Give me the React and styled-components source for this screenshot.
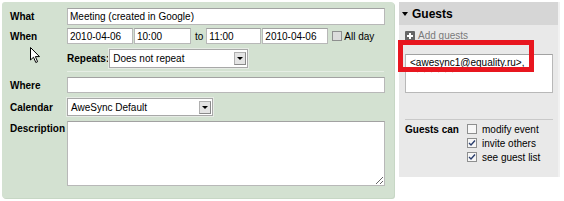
import React from 'react'
import styled, { createGlobalStyle } from 'styled-components'

const GlobalStyle = createGlobalStyle`
  html, body {
    margin: 0;
    padding: 0;
    background: #fff;
  }
  body {
    font-family: "Liberation Sans", Arial, sans-serif;
    font-size: 10px;
    color: #000;
  }
`

const Page = styled.div`
  position: relative;
  display: flex;
  align-items: flex-start;
  gap: 5px;
  width: 564px;
  height: 201px;
  padding: 2px 0 0 2px;
  box-sizing: border-box;
`

const EventPanel = styled.div`
  width: 392px;
  height: 196px;
  box-sizing: border-box;
  padding: 6px 9px 0 8px;
  background: #d3e1d1;
  border-radius: 3px;
  box-shadow: 1px 1px 0 #c7d7c5;
`

const FieldRow = styled.div`
  display: grid;
  grid-template-columns: 57px 1fr;
  align-items: ${p => (p.top ? 'start' : 'center')};
  margin-top: ${p => p.mt || 0}px;
`

const Label = styled.div`
  font-weight: bold;
  padding-top: ${p => (p.top ? 2 : 0)}px;
  white-space: nowrap;
`

const Inline = styled.div`
  display: flex;
  align-items: center;
`

const TextBox = styled.input`
  box-sizing: border-box;
  width: ${p => (p.w ? `${p.w}px` : '100%')};
  height: ${p => p.h || 17}px;
  margin: 0 0 0 ${p => p.ml || 0}px;
  padding: 0 2px;
  border: 1px solid #b8b8b8;
  border-top-color: #a2a2a2;
  background: #fff;
  font: inherit;
  color: #000;
  outline: none;
`

const TextArea = styled.textarea`
  display: block;
  box-sizing: border-box;
  width: ${p => (p.w ? `${p.w}px` : '100%')};
  height: ${p => p.h}px;
  margin: 0;
  padding: 2px 4px;
  border: 1px solid #b8b8b8;
  border-top-color: #a2a2a2;
  background: #fff;
  font: inherit;
  color: #000;
  outline: none;
`

const Word = styled.span`
  margin-left: ${p => p.ml || 0}px;
  margin-right: ${p => p.mr || 0}px;
  font-weight: ${p => (p.bold ? 'bold' : 'normal')};
  white-space: nowrap;
`

const SelectBox = styled.div`
  display: flex;
  align-items: center;
  justify-content: space-between;
  box-sizing: border-box;
  width: ${p => p.w}px;
  height: ${p => p.h}px;
  padding: 0 1px 0 3px;
  background: #fff;
  border: 1px solid #a8a8a8;
  box-shadow: 0 0 0 1px #e6ebe5;
`

const DropButton = styled.span`
  display: flex;
  align-items: center;
  justify-content: center;
  box-sizing: border-box;
  width: 12px;
  height: 13px;
  background: #e4e4e4;
  border: 1px solid #8a8a8a;
  border-top-color: #b0b0b0;
  border-left-color: #b0b0b0;

  &::after {
    content: '';
    border-left: 3px solid transparent;
    border-right: 3px solid transparent;
    border-top: 3px solid #000;
  }
`

const Divider = styled.div`
  height: 1px;
  margin: ${p => p.mt || 0}px ${p => p.mr || 0}px 0 ${p => p.ml || 0}px;
  background: ${p => p.color};
`

const Check = styled.span`
  display: inline-flex;
  align-items: center;
  justify-content: center;
  box-sizing: border-box;
  width: 10px;
  height: 10px;
  margin-left: ${p => p.ml || 0}px;
  border: 1px solid #8e8f8f;
  background: ${p => (p.filled ? '#dcdcdc' : '#f7f7f7')};
`

const GuestPanel = styled.div`
  width: 159px;
  height: 175px;
  background: #e9e9e9;
  box-shadow: 2px 0 0 #f1f1f1;
`

const GuestHeader = styled.div`
  display: flex;
  align-items: center;
  gap: 4px;
  height: 23px;
  padding-left: 3px;
  background: #d6d6d6;
  font-size: 12px;
  font-weight: bold;

  &::before {
    content: '';
    border-left: 3.5px solid transparent;
    border-right: 3.5px solid transparent;
    border-top: 4px solid #000;
  }
`

const GuestBody = styled.div`
  padding: 0 5px 0 6px;
`

const AddGuests = styled.div`
  display: flex;
  align-items: center;
  gap: 3px;
  margin-top: 5px;
  color: #7a7a7a;
`

const PlusIcon = styled.span`
  position: relative;
  width: 10px;
  height: 10px;
  background: #656565;
  border-radius: 1px;

  &::before,
  &::after {
    content: '';
    position: absolute;
    background: #fff;
  }
  &::before {
    left: 2px;
    top: 4px;
    width: 6px;
    height: 2px;
  }
  &::after {
    left: 4px;
    top: 2px;
    width: 2px;
    height: 6px;
  }
`

const GuestsBox = styled.div`
  margin-top: 13px;
`

const Misspelled = styled.span`
  text-decoration: underline wavy #e03030;
  text-decoration-thickness: 1px;
  text-underline-offset: 2px;
`

const PermissionRow = styled.div`
  display: grid;
  grid-template-columns: 62px 1fr;
  margin-top: 4px;
`

const PermissionList = styled.div`
  display: flex;
  flex-direction: column;
  gap: 4px;
`

const Permission = styled.label`
  display: flex;
  align-items: center;
  gap: 5px;
  height: 10px;
`

const Highlight = styled.div`
  position: absolute;
  left: 398px;
  top: 40px;
  width: 136px;
  height: 32px;
  box-sizing: border-box;
  border: 5px solid #e8161f;
  pointer-events: none;
`

const Cursor = styled.svg`
  position: absolute;
  left: 30px;
  top: 47px;
`

const Tick = () => (
  <svg width="8" height="8" viewBox="0 0 8 8">
    <path d="M1 4 L3 6 L7 1.5" fill="none" stroke="#2b3f6e" strokeWidth="1.4" />
  </svg>
)

const guestPermissions = [
  { label: 'modify event', checked: false },
  { label: 'invite others', checked: true },
  { label: 'see guest list', checked: true },
]

export default function App() {
  return (
    <>
      <GlobalStyle />
      <Page>
        <EventPanel>
          <FieldRow>
            <Label>What</Label>
            <TextBox defaultValue="Meeting (created in Google)" readOnly />
          </FieldRow>

          <FieldRow mt={3}>
            <Label>When</Label>
            <Inline>
              <TextBox w={66} h={16} defaultValue="2010-04-06" readOnly />
              <TextBox w={57} h={16} ml={1} defaultValue="10:00" readOnly />
              <Word ml={4} mr={3}>to</Word>
              <TextBox w={55} h={16} defaultValue="11:00" readOnly />
              <TextBox w={66} h={16} ml={1} defaultValue="2010-04-06" readOnly />
              <Check ml={4} filled />
              <Word ml={2}>All day</Word>
            </Inline>
          </FieldRow>

          <FieldRow mt={5}>
            <span />
            <Inline>
              <Word bold>Repeats:</Word>
              <SelectBox w={139} h={19}>
                <span>Does not repeat</span>
                <DropButton />
              </SelectBox>
            </Inline>
          </FieldRow>

          <Divider mt={3} ml={57} mr={1} color="#e6eee5" />

          <FieldRow mt={5}>
            <Label>Where</Label>
            <TextBox h={16} readOnly />
          </FieldRow>

          <FieldRow mt={5}>
            <Label>Calendar</Label>
            <Inline>
              <SelectBox w={146} h={18}>
                <span>AweSync Default</span>
                <DropButton />
              </SelectBox>
            </Inline>
          </FieldRow>

          <FieldRow mt={5} top>
            <Label top>Description</Label>
            <TextArea h={65} readOnly />
          </FieldRow>
        </EventPanel>

        <GuestPanel>
          <GuestHeader>Guests</GuestHeader>
          <GuestBody>
            <AddGuests>
              <PlusIcon />
              <span>Add guests</span>
            </AddGuests>
            <GuestsBox>
              <TextArea as="div" w={148} h={39}>
                &lt;<Misspelled>awesync</Misspelled>1@equality.ru&gt;,
              </TextArea>
            </GuestsBox>
            <Divider mt={26} color="#c9c9c9" />
            <PermissionRow>
              <Label>Guests can</Label>
              <PermissionList>
                {guestPermissions.map(item => (
                  <Permission key={item.label}>
                    <Check>{item.checked && <Tick />}</Check>
                    <span>{item.label}</span>
                  </Permission>
                ))}
              </PermissionList>
            </PermissionRow>
          </GuestBody>
        </GuestPanel>

        <Highlight />
        <Cursor width="11" height="17" viewBox="0 0 11 17">
          <path d="M0.5 0.5 L0.5 13 L3.5 10.2 L5.8 15.5 L7.6 14.7 L5.4 9.6 L9.5 9.6 Z" fill="#fff" stroke="#000" strokeWidth="1" />
        </Cursor>
      </Page>
    </>
  )
}
